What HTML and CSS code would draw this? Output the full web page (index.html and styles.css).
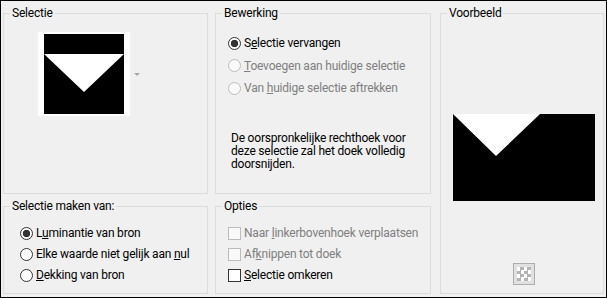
FILE: index.html
```html
<!DOCTYPE html>
<html lang="nl">
<head>
  <meta charset="UTF-8">
  <title>Selectie uit masker</title>
  <link rel="stylesheet" href="styles.css">
</head>
<body>
  <div class="window">
    <fieldset class="group sel">
      <legend>Selectie</legend>
      <div class="swatch-row">
        <div class="swatch">
          <svg width="80" height="80" viewBox="0 0 80 80">
            <rect width="80" height="80" fill="#000"/>
            <polygon points="0,20 80,20 40,58" fill="#fff"/>
          </svg>
        </div>
        <span class="drop-arrow"></span>
      </div>
    </fieldset>

    <fieldset class="group bew">
      <legend>Bewerking</legend>
      <div class="options top-options">
        <label class="option"><input type="radio" name="op" checked><span>S<u>e</u>lectie vervangen</span></label>
        <label class="option disabled"><input type="radio" name="op" disabled><span><u>T</u>oevoegen aan huidige selectie</span></label>
        <label class="option disabled"><input type="radio" name="op" disabled><span>Van <u>h</u>uidige selectie aftrekken</span></label>
      </div>
      <p class="note">De oorspronkelijke rechthoek voor deze selectie zal het doek volledig doorsnijden.</p>
    </fieldset>

    <fieldset class="group voor">
      <legend>Voorbeeld</legend>
      <div class="preview">
        <svg width="142" height="87" viewBox="0 0 142 87">
          <rect width="142" height="87" fill="#000"/>
          <polygon points="0,0 87,0 43,42" fill="#fff"/>
        </svg>
      </div>
      <button class="checker-btn" type="button"><span class="checker"></span></button>
    </fieldset>

    <fieldset class="group maken">
      <legend>Selectie maken van:</legend>
      <div class="options bottom-options src">
        <label class="option"><input type="radio" name="src" checked><span>L<u>u</u>minantie van bron</span></label>
        <label class="option"><input type="radio" name="src"><span>Elke waarde niet gelijk aan <u>n</u>ul</span></label>
        <label class="option"><input type="radio" name="src"><span><u>D</u>ekking van bron</span></label>
      </div>
    </fieldset>

    <fieldset class="group opties">
      <legend>Opties</legend>
      <div class="options bottom-options chk">
        <label class="option disabled"><input type="checkbox" disabled><span>Naar <u>l</u>inkerbovenhoek verplaatsen</span></label>
        <label class="option disabled"><input type="checkbox" disabled><span>Af<u>k</u>nippen tot doek</span></label>
        <label class="option"><input type="checkbox"><span><u>S</u>electie omkeren</span></label>
      </div>
    </fieldset>
  </div>
</body>
</html>
```

FILE: styles.css
```css
body {
  margin: 0;
  background: #f0f0f0;
  font-family: Roboto, 'Noto Sans', sans-serif;
  font-size: 12px;
  letter-spacing: -0.2px;
  color: #000;
}
.window {
  box-sizing: border-box;
  width: 607px;
  height: 298px;
  border: 1px solid #000;
  background: #f0f0f0;
  padding: 4px 0 0 2px;
  display: grid;
  grid-template-columns: 205px 7px 216px 9px 164px;
  grid-template-rows: 189px 96px;
  row-gap: 4px;
}
.group {
  margin: 0;
  min-width: 0;
  padding: 0 6px;
  border: 1px solid #dcdcdc;
  box-sizing: border-box;
}
.group legend {
  padding: 0 2px;
  line-height: 16px;
}
.sel { grid-column: 1; grid-row: 1; }
.bew { grid-column: 3; grid-row: 1; }
.voor { grid-column: 5; grid-row: 1 / 3; }
.maken { grid-column: 1; grid-row: 2; }
.opties { grid-column: 3; grid-row: 2; }

.swatch-row {
  display: flex;
  align-items: center;
  margin: 11px 0 0 28px;
}
.swatch {
  width: 92px;
  height: 84px;
  box-sizing: border-box;
  padding: 2px 6px;
  background: #fff;
}
.swatch svg,
.preview svg {
  display: block;
}
.drop-arrow {
  margin-left: 4px;
  width: 0;
  height: 0;
  border-left: 3px solid transparent;
  border-right: 3px solid transparent;
  border-top: 3px solid #a8a8a8;
}

.options {
  display: flex;
  flex-direction: column;
}
.top-options {
  padding-top: 11px;
}
.top-options .option {
  height: 22.5px;
  padding-left: 6px;
}
.bottom-options {
  padding-top: 8.5px;
}
.bottom-options .option {
  height: 21px;
}
.src .option {
  padding-left: 10px;
}
.chk .option {
  padding-left: 6px;
}
.option {
  display: flex;
  align-items: center;
  gap: 3px;
  white-space: nowrap;
}
.option.disabled {
  color: #7f7f7f;
}
.option input {
  appearance: none;
  margin: 0;
  width: 13px;
  height: 13px;
  box-sizing: border-box;
  border: 1px solid #333;
  background: #fff;
  flex: none;
}
.option input[type="radio"] {
  border-radius: 50%;
}
.option input[type="radio"]:checked {
  background: radial-gradient(circle, #333 0 3.4px, #fff 4px);
}
.option input:disabled {
  border-color: #bcbcbc;
  background: #f9f9f9;
}
.note {
  margin: 32px 0 0 9px;
  line-height: 13px;
  width: 196px;
}

.preview {
  margin: 93px 0 0 6px;
}
.checker-btn {
  display: block;
  margin: 62px 0 0 66px;
  width: 22px;
  height: 22px;
  padding: 3px;
  border: 1px solid #adadad;
  background: #e1e1e1;
  box-sizing: border-box;
}
.checker {
  display: block;
  width: 14px;
  height: 14px;
  background: repeating-conic-gradient(#b4b4b4 0 25%, #fff 0 50%) 0 0 / 7px 7px;
}
```
